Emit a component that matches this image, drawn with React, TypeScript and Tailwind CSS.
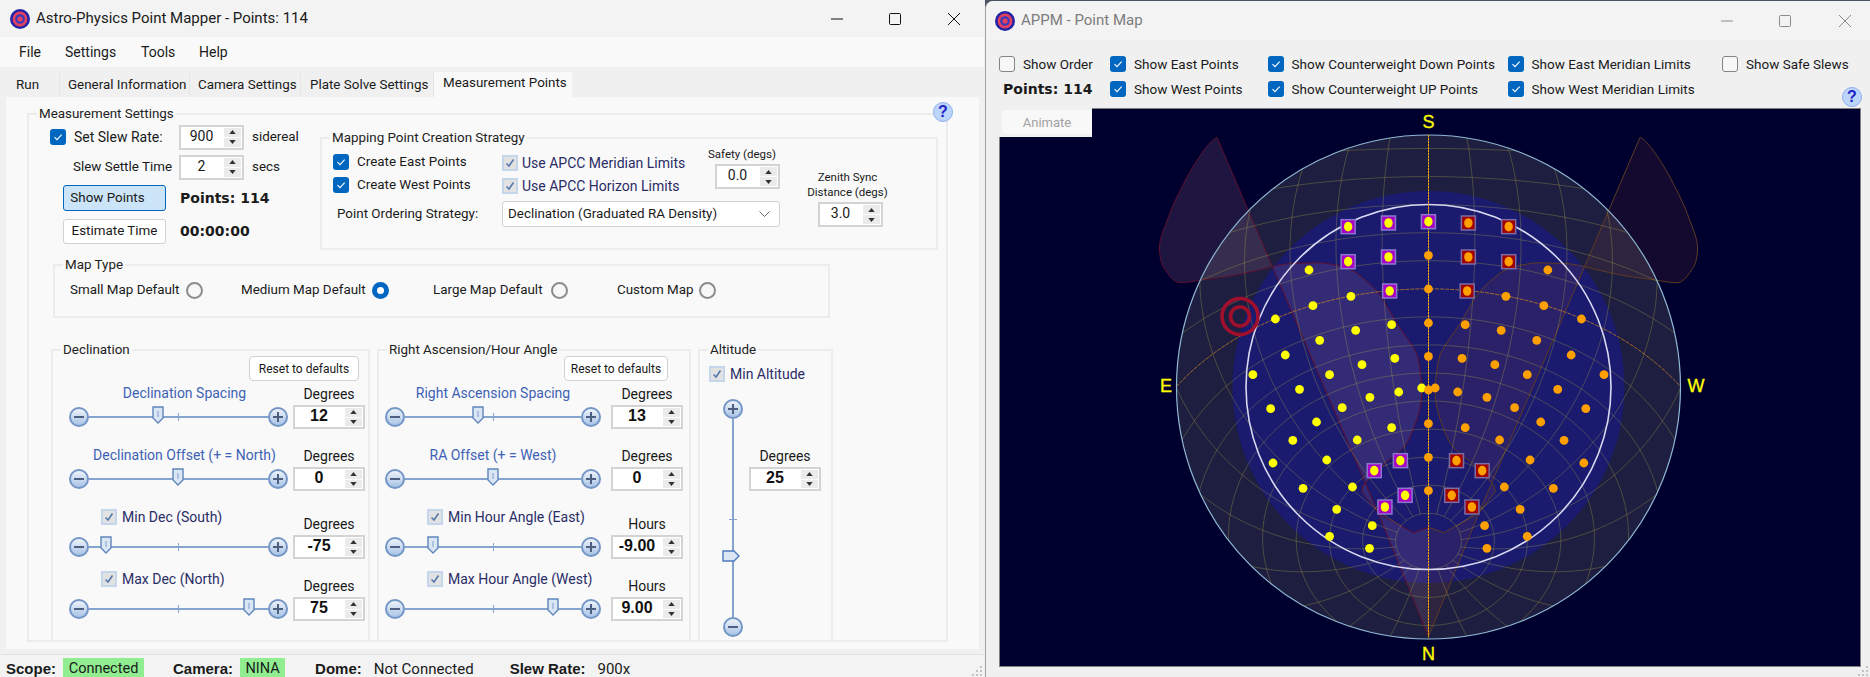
import type { ReactNode } from "react";

// ---------- small win32 style controls ----------

const Check = ({ kind = "on" }: { kind?: "on" | "off" | "tri" }) => {
  if (kind === "off") {
    return <span className="block h-4 w-4 shrink-0 rounded-[3px] border border-[#858585] bg-[#f7f7f7]" />;
  }
  if (kind === "tri") {
    return (
      <span className="flex h-4 w-4 shrink-0 items-center justify-center border-2 border-[#c6d6ea] bg-[#e2e2e2]">
        <svg width="10" height="10" viewBox="0 0 10 10">
          <path d="M1.5 5.5 4 8l4.5-6.5" fill="none" stroke="#5578ad" strokeWidth="1.6" />
        </svg>
      </span>
    );
  }
  return (
    <span className="flex h-4 w-4 shrink-0 items-center justify-center rounded-[3px] bg-[#0067c0]">
      <svg width="10" height="10" viewBox="0 0 10 10">
        <path d="M1.5 5.2 4 7.6l4.6-5" fill="none" stroke="#fff" strokeWidth="1.1" />
      </svg>
    </span>
  );
};

const Radio = ({ on = false }: { on?: boolean }) =>
  on ? (
    <span className="flex h-[17px] w-[17px] shrink-0 items-center justify-center rounded-full bg-[#0067c0]">
      <span className="h-[7px] w-[7px] rounded-full bg-white" />
    </span>
  ) : (
    <span className="block h-[17px] w-[17px] shrink-0 rounded-full border-2 border-[#8c8c8c] bg-[#f7f7f7]" />
  );

const Tri = ({ down = false }: { down?: boolean }) => (
  <svg width="7" height="4" viewBox="0 0 8 5">
    <path d={down ? "M0 0h8L4 5z" : "M0 5h8L4 0z"} fill="#333" />
  </svg>
);

const Spinner = ({ value, wide = false }: { value: string; wide?: boolean }) => (
  <div
    className={`flex shrink-0 border-2 border-[#d3d3d3] bg-white ${wide ? "h-[24px] w-[72px]" : "h-[25px] w-[65px]"}`}
  >
    <div
      className={`flex-1 pr-[2px] text-center ${
        wide
          ? "font-['Liberation_Sans',sans-serif] text-[16px] leading-[18px] font-bold text-[#111]"
          : "text-[14px] leading-[18px]"
      }`}
    >
      {value}
    </div>
    <div className="mr-px flex w-[17px] flex-col gap-px bg-white py-px">
      <div className="flex flex-1 items-center justify-center bg-[#ebebeb]">
        <Tri />
      </div>
      <div className="flex flex-1 items-center justify-center bg-[#ebebeb]">
        <Tri down />
      </div>
    </div>
  </div>
);

const Group = ({
  title,
  className,
  children,
}: {
  title: string;
  className: string;
  children?: ReactNode;
}) => (
  <fieldset className={`border-2 border-[#ececec] ${className}`}>
    <legend className="ml-[8px] h-[14px] px-[2px] text-[13.4px] leading-[14px] text-[#222]">{title}</legend>
    {children}
  </fieldset>
);

const Round = ({ plus = false }: { plus?: boolean }) => (
  <span className="flex h-5 w-5 shrink-0 items-center justify-center rounded-full border-2 border-[#7396c6] bg-gradient-to-b from-[#eef3fa] to-[#a9c3e6]">
    <svg width="10" height="10" viewBox="0 0 10 10">
      <path d={plus ? "M0 5h10M5 0v10" : "M0 5h10"} stroke="#4c5f80" strokeWidth="2" />
    </svg>
  </span>
);

const Thumb = () => (
  <svg width="12" height="18" viewBox="0 0 12 18">
    <path d="M1 1h10v11l-5 5-5-5z" fill="#dbe6f5" stroke="#5f86bb" strokeWidth="1.4" />
    <path d="M6 5v6" stroke="#7f9fcb" />
  </svg>
);

const HSlider = ({ width, thumb, tick }: { width: number; thumb: number; tick: number }) => (
  <div className="relative flex h-5 items-center" style={{ width }}>
    <Round />
    <span className="h-[2px] flex-1 bg-[#85a5cf]" />
    <Round plus />
    <span className="absolute top-[6px] h-2 w-px bg-[#85a5cf]" style={{ left: tick }} />
    <span className="absolute -top-[1px] flex" style={{ left: thumb - 6 }}>
      <Thumb />
    </span>
  </div>
);

const Help = ({ className }: { className: string }) => (
  <span
    className={`absolute flex h-5 w-5 items-center justify-center rounded-full border border-[#8fb0ea] bg-[#bcd5fb] font-['Liberation_Sans',sans-serif] text-[16px] font-bold text-[#2222c8] ${className}`}
  >
    ?
  </span>
);

const Logo = ({ className }: { className: string }) => (
  <svg className={className} width="20" height="20" viewBox="0 0 20 20">
    <circle cx="10" cy="10" r="10" fill="#2324a5" />
    <circle cx="10" cy="10" r="7.4" fill="#e5405e" />
    <circle cx="10" cy="10" r="4.8" fill="#3a3ab8" />
    <circle cx="10" cy="10" r="2.6" fill="#e5405e" />
  </svg>
);

const WinButtons = ({ color, gaps }: { color: string; gaps: [string, string] }) => (
  <div className="flex items-center">
    <svg width="12" height="12" viewBox="0 0 12 12">
      <path d="M0 6h12" stroke={color} />
    </svg>
    <svg className={gaps[0]} width="12" height="12" viewBox="0 0 12 12">
      <rect x=".5" y=".5" width="11" height="11" rx="1" fill="none" stroke={color} />
    </svg>
    <svg className={gaps[1]} width="12" height="12" viewBox="0 0 12 12">
      <path d="M0 0l12 12M12 0 0 12" stroke={color} />
    </svg>
  </div>
);

const Grip = ({ className }: { className: string }) => (
  <svg className={`absolute ${className}`} width="14" height="12" viewBox="0 0 14 12" fill="#c4c4c4">
    <rect x="10" y="1" width="2" height="2" />
    <rect x="6" y="5" width="2" height="2" />
    <rect x="10" y="5" width="2" height="2" />
    <rect x="2" y="9" width="2" height="2" />
    <rect x="6" y="9" width="2" height="2" />
    <rect x="10" y="9" width="2" height="2" />
  </svg>
);

// ---------- slider rows ----------

type Row = {
  title: string;
  checked?: boolean;
  unit: string;
  value: string;
  thumb: number;
  gap: string;
};

const titleTone = (row: Row) => (row.checked ? "text-[#2a2c66]" : "text-[#3d62b5]");

const SliderRow = ({
  row,
  width,
  spinGap,
  tick,
  titleClass,
  checkOffset,
}: {
  row: Row;
  width: number;
  spinGap: string;
  tick: number;
  titleClass: string;
  checkOffset: string;
}) => (
  <div className={row.gap}>
    <div className={`flex ${row.checked ? "h-[26px]" : "h-[19px]"}`}>
      <div style={{ width }}>
        {row.checked ? (
          <div className={`flex h-4 items-center gap-[5px] ${checkOffset}`}>
            <Check kind="tri" />
            <span className={`text-[14px] ${titleTone(row)}`}>{row.title}</span>
          </div>
        ) : (
          <div className={`whitespace-nowrap text-center text-[14px] leading-[15px] ${titleClass} ${titleTone(row)}`}>
            {row.title}
          </div>
        )}
      </div>
      <div className={`flex w-[72px] items-end justify-center pb-[3px] text-[14px] leading-[15px] ${spinGap}`}>
        {row.unit}
      </div>
    </div>
    <div className="flex items-center">
      <HSlider width={width} thumb={row.thumb} tick={tick} />
      <div className={spinGap}>
        <Spinner wide value={row.value} />
      </div>
    </div>
  </div>
);

const decRows: Row[] = [
  { title: "Declination Spacing", unit: "Degrees", value: "12", thumb: 89, gap: "mt-[5px]" },
  { title: "Declination Offset (+ = North)", unit: "Degrees", value: "0", thumb: 109, gap: "mt-[19px]" },
  { title: "Min Dec (South)", checked: true, unit: "Degrees", value: "-75", thumb: 37, gap: "mt-[18px]" },
  { title: "Max Dec (North)", checked: true, unit: "Degrees", value: "75", thumb: 180, gap: "mt-[12px]" },
];

const raRows: Row[] = [
  { title: "Right Ascension Spacing", unit: "Degrees", value: "13", thumb: 93, gap: "mt-[5px]" },
  { title: "RA Offset (+ = West)", unit: "Degrees", value: "0", thumb: 108, gap: "mt-[19px]" },
  { title: "Min Hour Angle (East)", checked: true, unit: "Hours", value: "-9.00", thumb: 48, gap: "mt-[18px]" },
  { title: "Max Hour Angle (West)", checked: true, unit: "Hours", value: "9.00", thumb: 168, gap: "mt-[12px]" },
];

// ---------- point map drawing, azimuthal equidistant sky at latitude 35 ----------

const CX = 1428.5;
const CY = 387;
const PX_PER_DEG = 2.8056;
const rad = Math.PI / 180;
const LAT = 35 * rad;

const sky = (dec: number, ha: number): [number, number] => {
  const d = dec * rad;
  const h = ha * rad;
  const sinAlt = Math.sin(LAT) * Math.sin(d) + Math.cos(LAT) * Math.cos(d) * Math.cos(h);
  const z = 90 - Math.asin(Math.max(-1, Math.min(1, sinAlt))) / rad;
  const north = Math.cos(LAT) * Math.sin(d) - Math.sin(LAT) * Math.cos(d) * Math.cos(h);
  const west = Math.cos(d) * Math.sin(h);
  const n = Math.hypot(north, west) || 1;
  const r = z * PX_PER_DEG;
  return [CX + (r * west) / n, CY + (r * north) / n];
};

const toPath = (pts: [number, number][]) =>
  "M" + pts.map(([x, y]) => `${x.toFixed(1)} ${y.toFixed(1)}`).join("L");

const decLine = (dec: number) => {
  const pts: [number, number][] = [];
  for (let ha = -180; ha <= 180; ha += 3) pts.push(sky(dec, ha));
  return toPath(pts);
};

const haLine = (ha: number) => {
  const pts: [number, number][] = [];
  for (let dec = -54; dec <= 80; dec += 2) pts.push(sky(dec, ha));
  return toPath(pts);
};

const decs = [-50, -40, -30, -20, -10, 10, 20, 30, 40, 50, 60, 70, 80];
const hours = Array.from({ length: 24 }, (_, i) => -180 + i * 15);

// point places read off a crop, x at 2.529 and y at 3 to the pixel, origin 1120,110
const at = ([x, y]: number[]) => [1120 + x / 2.529, 110 + y / 3];

const yellow = [
  [478, 480], [584, 559], [488, 587], [393, 627], [596, 661], [687, 644], [505, 691], [418, 735],
  [612, 764], [695, 745], [530, 794], [336, 794], [454, 838], [705, 846], [632, 862], [763, 834],
  [381, 896], [562, 893], [497, 936], [687, 953], [437, 991], [600, 990], [387, 1059], [523, 1050],
  [463, 1135], [588, 1131], [548, 1198], [638, 1247], [530, 1279], [631, 1315],
].map(at);

const orange = [
  [1082, 480], [976, 559], [1072, 587], [1167, 627], [873, 644], [964, 661], [1054, 691], [1141, 735],
  [865, 745], [948, 764], [1030, 794], [1224, 794], [1107, 838], [854, 846], [928, 862], [797, 834],
  [1178, 896], [998, 893], [1064, 936], [873, 953], [960, 990], [1123, 991], [1173, 1059], [1037, 1050],
  [1096, 1135], [972, 1131], [1012, 1198], [922, 1247], [1030, 1279], [928, 1315],
  [780, 436], [780, 537], [780, 639], [780, 739], [780, 840], [780, 941], [780, 1042], [780, 1142],
].map(at);

const purple = [
  [577, 350], [679, 339], [780, 335], [577, 455], [679, 441], [682, 543],
  [709, 1052], [643, 1082], [721, 1156], [670, 1191],
].map(at);

const red = [
  [881, 339], [983, 350], [881, 441], [983, 455], [878, 543],
  [851, 1052], [916, 1082], [839, 1156], [890, 1191],
].map(at);

const horn =
  "M1216.9 137.3C1209 141 1198 158 1187 177C1178 195 1172 206 1167.4 220C1162 233 1159 242 1159.5 250C1160 260 1162 266 1165.5 270C1170 277 1174 282 1179.3 282.7C1190 283 1203 279 1214.9 278.3C1235 276 1255 271 1272.2 266.7" +
  "C1282 264 1292 263 1301.9 263.3C1312 263 1320 262 1329.6 264C1342 266 1349 268 1357.2 273.3C1368 282 1375 288 1381 296.7C1388 308 1392 315 1396.8 323.3C1404 335 1411 342 1416.6 353.3C1420 365 1421 376 1422 387C1422 400 1420 410 1416.7 420C1413 430 1411 436 1406.7 443.3C1401 452 1394 456 1386.7 461.7L1363.3 485L1361.7 491.7L1378.3 513.3Z";
const cone = "M1378.3 513.3L1413.3 532.7L1428.5 527.3L1428.5 636.7Z";

const mirror = `translate(${2 * CX} 0) scale(-1 1)`;

const PointMap = () => (
  <svg className="block" width="860" height="557" viewBox="1000 109 860 557">
    <rect x="1000" y="109" width="860" height="557" fill="#00002f" />
    <defs>
      <clipPath id="horizon">
        <circle cx={CX} cy={CY} r="252" />
      </clipPath>
    </defs>

    <circle cx={CX} cy={CY} r="252" fill="#1e1e40" />
    <circle cx={CX} cy={CY} r="196" fill="#1a1a6e" />

    <g transform={mirror}>
      <path d={horn} fill="#b45a3c" fillOpacity=".11" stroke="#5e3a24" />
      <path d={cone} fill="#b45a3c" fillOpacity=".11" stroke="#5e3a24" />
    </g>
    <path d={horn} fill="#c88caa" fillOpacity=".15" stroke="#5e1030" />
    <path d={cone} fill="#c88caa" fillOpacity=".15" stroke="#5e1030" />

    <g clipPath="url(#horizon)" fill="none" stroke="#a8a448" strokeOpacity=".34">
      {decs.map((d) => (
        <path key={d} d={decLine(d)} />
      ))}
      {hours.map((h) => (
        <path key={h} d={haLine(h)} />
      ))}
      <path d={decLine(0)} stroke="#c07c28" strokeOpacity=".8" strokeDasharray="4 1" />
    </g>

    <circle cx={CX} cy={CY} r="252" fill="none" stroke="#8fb8d2" strokeWidth="1.2" />
    <circle cx={CX} cy={CY} r="182.5" fill="none" stroke="#d8d8f2" strokeWidth="1.6" />
    <path d={`M${CX} 135V637`} stroke="#ffa500" strokeDasharray="2 1" />

    <g fill="none" stroke="#a0102c" strokeWidth="3.6">
      <circle cx="1240" cy="316.5" r="18" />
      <circle cx="1240" cy="316.5" r="9.5" />
    </g>

    {purple.map(([x, y]) => (
      <g key={`${x}-${y}`}>
        <rect x={x - 7} y={y - 7} width="14" height="14" fill="#a800c4" stroke="#8a78d0" strokeWidth="1.5" />
        <ellipse cx={x} cy={y} rx="4.2" ry="4.8" fill="#ffff00" />
      </g>
    ))}
    {red.map(([x, y]) => (
      <g key={`${x}-${y}`}>
        <rect x={x - 7} y={y - 7} width="14" height="14" fill="#a00000" stroke="#7a6ca8" strokeWidth="1.5" />
        <ellipse cx={x} cy={y} rx="4.2" ry="4.8" fill="#ffa000" />
      </g>
    ))}
    {yellow.map(([x, y]) => (
      <circle key={`${x}-${y}`} cx={x} cy={y} r="4.4" fill="#ffff00" />
    ))}
    {orange.map(([x, y]) => (
      <circle key={`${x}-${y}`} cx={x} cy={y} r="4.4" fill="#ffa000" />
    ))}

    <g
      fill="#ffff00"
      stroke="#ffff00"
      strokeWidth=".3"
      fontFamily="'Liberation Sans', sans-serif"
      fontSize="18"
      textAnchor="middle"
    >
      <text x="1428.5" y="128">S</text>
      <text x="1428.5" y="660">N</text>
      <text x="1166" y="392">E</text>
      <text x="1696" y="392">W</text>
    </g>
  </svg>
);

// ---------- windows ----------

const tabClass = "flex h-6 items-center whitespace-nowrap border-r border-[#e6e6e6]";

const PointMapper = () => (
  <div className="relative flex h-[677px] w-[984px] shrink-0 flex-col bg-[#f0f0f0]">
    <div className="flex h-[37px] shrink-0 items-center bg-[#f3f3f3]">
      <Logo className="ml-[10px]" />
      <span className="ml-[6px] text-[15px]">Astro-Physics Point Mapper - Points: 114</span>
      <div className="ml-auto mr-[24px]">
        <WinButtons color="#111" gaps={["ml-[46px]", "ml-[47px]"]} />
      </div>
    </div>

    <div className="flex h-[30px] shrink-0 items-center bg-[#f9f9f9] pl-[19px] text-[14px]">
      <span className="w-[46px]">File</span>
      <span className="w-[76px]">Settings</span>
      <span className="w-[58px]">Tools</span>
      <span>Help</span>
    </div>

    <div className="flex h-[30px] shrink-0 items-end pl-[8px] text-[13.4px]">
      <span className={`${tabClass} w-[52px] pl-2`}>Run</span>
      <span className={`${tabClass} w-[130px] pl-2`}>General Information</span>
      <span className={`${tabClass} w-[111px] pl-2`}>Camera Settings</span>
      <span className={`${tabClass} w-[133px] pl-[9px]`}>Plate Solve Settings</span>
      <span className="flex h-[25px] w-[138px] items-center whitespace-nowrap bg-[#f9f9f9] pb-[3px] pl-[9px]">
        Measurement Points
      </span>
    </div>

    <div className="relative ml-[6px] h-[552px] w-[973px] shrink-0 bg-[#f9f9f9] pl-[21px] pt-[10px]">
      <Group title="Measurement Settings" className="h-[535px] w-[921px]">
        <div className="flex">
          <div className="w-[291px] shrink-0 text-[13.4px]">
            <div className="mt-[4px] flex h-6 items-center">
              <div className="flex w-[150px] items-center pl-[21px]">
                <Check />
                <span className="ml-2 text-[14px]">Set Slew Rate:</span>
              </div>
              <Spinner value="900" />
              <span className="ml-2">sidereal</span>
            </div>
            <div className="mt-[6px] flex h-6 items-center">
              <div className="w-[150px] pl-[44px]">Slew Settle Time</div>
              <Spinner value="2" />
              <span className="ml-2">secs</span>
            </div>
            <div className="mt-[6px] flex items-center">
              <button className="ml-[34px] h-[26px] w-[103px] rounded-[3px] border border-[#0067c0] bg-[#cce4f7] pr-[14px] text-center">
                Show Points
              </button>
              <span className="ml-[14px] font-['DejaVu_Sans',sans-serif] text-[14px] font-bold">Points: 114</span>
            </div>
            <div className="mt-[8px] flex items-center">
              <button className="ml-[34px] h-[25px] w-[103px] rounded-[3px] border border-[#d2d2d2] bg-white text-center">
                Estimate Time
              </button>
              <span className="ml-[14px] font-['DejaVu_Sans',sans-serif] text-[14px] font-bold">00:00:00</span>
            </div>
          </div>

          <Group title="Mapping Point Creation Strategy" className="mt-[10px] h-[119px] w-[618px]">
            <div className="flex text-[13.4px]">
              <div className="w-[463px] shrink-0">
                <div className="flex pt-[9px]">
                  <div className="ml-[11px] flex w-[169px] flex-col gap-[7px]">
                    <div className="flex h-4 items-center gap-2">
                      <Check />
                      Create East Points
                    </div>
                    <div className="flex h-4 items-center gap-2">
                      <Check />
                      Create West Points
                    </div>
                  </div>
                  <div className="mt-px flex w-[198px] flex-col gap-[7px] text-[14px] text-[#2a2c66]">
                    <div className="flex h-4 items-center gap-1">
                      <Check kind="tri" />
                      Use APCC Meridian Limits
                    </div>
                    <div className="flex h-4 items-center gap-1">
                      <Check kind="tri" />
                      Use APCC Horizon Limits
                    </div>
                  </div>
                  <div className="-mt-[7px] w-[85px]">
                    <div className="h-[14px] pl-[8px] text-[11.5px] leading-[14px]">Safety (degs)</div>
                    <div className="ml-[15px] mt-[3px]">
                      <Spinner value="0.0" />
                    </div>
                  </div>
                </div>
                <div className="mt-[7px] flex items-center">
                  <span className="ml-[15px] w-[165px]">Point Ordering Strategy:</span>
                  <div className="flex h-[26px] w-[278px] items-center justify-between rounded-[3px] border border-[#d2d2d2] bg-white pl-[5px] pr-[9px]">
                    Declination (Graduated RA Density)
                    <svg width="11" height="6" viewBox="0 0 11 6">
                      <path d="M.5.5l5 5 5-5" fill="none" stroke="#666" />
                    </svg>
                  </div>
                </div>
              </div>
              <div className="ml-[21px] mt-[25px] w-[83px] text-center text-[11.5px] leading-[15px]">
                <div>Zenith Sync</div>
                <div className="whitespace-nowrap">Distance (degs)</div>
                <div className="ml-[12px] mt-[2px] text-[14px]">
                  <Spinner value="3.0" />
                </div>
              </div>
            </div>
          </Group>
        </div>

        <Group title="Map Type" className="ml-[24px] mt-[8px] h-[60px] w-[777px]">
          <div className="flex h-[36px] items-center pl-[15px] text-[13.4px]">
            <span className="w-[116px]">Small Map Default</span>
            <Radio />
            <span className="ml-[38px] w-[131px]">Medium Map Default</span>
            <Radio on />
            <span className="ml-[44px] w-[118px]">Large Map Default</span>
            <Radio />
            <span className="ml-[49px] w-[82px]">Custom Map</span>
            <Radio />
          </div>
        </Group>

        <div className="ml-[22px] mt-[25px] flex gap-[7px]">
          <Group title="Declination" className="h-[298px] w-[319px] border-b-0">
            <div className="-mt-px ml-[196px] flex h-[25px] w-[110px] items-center justify-center rounded-[4px] border border-[#d2d2d2] bg-white text-[12px]">
              Reset to defaults
            </div>
            <div className="ml-[16px]">
              {decRows.map((row) => (
                <SliderRow
                  key={row.title}
                  row={row}
                  width={219}
                  spinGap="ml-[5px]"
                  tick={109}
                  titleClass="pl-[12px]"
                  checkOffset="pl-[32px]"
                />
              ))}
            </div>
          </Group>

          <Group title="Right Ascension/Hour Angle" className="h-[298px] w-[314px] border-b-0">
            <div className="-mt-px ml-[185px] flex h-[25px] w-[104px] items-center justify-center rounded-[4px] border border-[#d2d2d2] bg-white text-[12px]">
              Reset to defaults
            </div>
            <div className="ml-[6px]">
              {raRows.map((row) => (
                <SliderRow
                  key={row.title}
                  row={row}
                  width={216}
                  spinGap="ml-[10px]"
                  tick={108}
                  titleClass=""
                  checkOffset="pl-[42px]"
                />
              ))}
            </div>
          </Group>

          <Group title="Altitude" className="h-[298px] w-[135px] border-b-0">
            <div className="ml-[9px] mt-[9px] flex h-4 items-center gap-[5px] text-[14px] text-[#2a2c66]">
              <Check kind="tri" />
              Min Altitude
            </div>
            <div className="mt-[17px] flex">
              <div className="relative ml-[23px] flex h-[238px] w-5 flex-col items-center">
                <Round plus />
                <span className="w-[2px] flex-1 bg-[#85a5cf]" />
                <Round />
                <span className="absolute left-[6px] top-[120px] h-px w-2 bg-[#85a5cf]" />
                <svg className="absolute -left-[1px] top-[151px]" width="18" height="12" viewBox="0 0 18 12">
                  <path d="M1 1h11l5 5-5 5H1z" fill="#dbe6f5" stroke="#4f7ab8" strokeWidth="1.4" />
                </svg>
              </div>
              <div className="ml-[6px] mt-[49px]">
                <div className="flex h-[19px] w-[72px] items-end justify-center pb-[3px] text-[14px] leading-[15px]">
                  Degrees
                </div>
                <Spinner wide value="25" />
              </div>
            </div>
          </Group>
        </div>
      </Group>
      <Help className="left-[927px] top-[5px]" />
    </div>

    <div className="mt-[5px] flex h-[23px] flex-1 items-end overflow-hidden border-t border-[#e2e2e2] bg-[#f3f3f3] pl-[6px] text-[15px] leading-[16px]">
      <b className="font-['Liberation_Sans',sans-serif] text-[15px]">Scope:</b>
      <span className="ml-[7px] h-[19px] w-[81px] bg-[#90ee90] pt-[3px] text-center text-[14.5px]">Connected</span>
      <b className="ml-[29px] font-['Liberation_Sans',sans-serif] text-[15px]">Camera:</b>
      <span className="ml-[7px] h-[19px] w-[45px] bg-[#90ee90] pt-[3px] text-center text-[14.5px]">NINA</span>
      <b className="ml-[30px] font-['Liberation_Sans',sans-serif] text-[15px]">Dome:</b>
      <span className="ml-[12px]">Not Connected</span>
      <b className="ml-[36px] font-['Liberation_Sans',sans-serif] text-[15px]">Slew Rate:</b>
      <span className="ml-[12px]">900x</span>
    </div>
    <Grip className="bottom-0 right-0" />
  </div>
);

const mapChecks: [string, "on" | "off"][][] = [
  [["Show East Points", "on"], ["Show Counterweight Down Points", "on"], ["Show East Meridian Limits", "on"], ["Show Safe Slews", "off"]],
  [["Show West Points", "on"], ["Show Counterweight UP Points", "on"], ["Show West Meridian Limits", "on"]],
];

const MapCheck = ({ label, kind }: { label: string; kind: "on" | "off" }) => (
  <div className="flex h-4 items-center gap-2 whitespace-nowrap">
    <Check kind={kind} />
    {label}
  </div>
);

const PointMapWindow = () => (
  <div className="relative mt-px flex h-[676px] flex-1 flex-col rounded-tl-[8px] border-l border-[#a4a4a4] bg-[#f0f0f0]">
    <div className="flex h-[39px] shrink-0 items-center rounded-tl-[8px] bg-[#f3f3f3]">
      <Logo className="ml-[9px]" />
      <span className="ml-[6px] text-[15px] text-[#7c7c7c]">APPM - Point Map</span>
      <div className="ml-auto mr-[19px]">
        <WinButtons color="#8a8a8a" gaps={["ml-[46px]", "ml-[48px]"]} />
      </div>
    </div>

    <div className="ml-[13px] mt-[16px] grid grid-cols-[111px_157.5px_240px_214.5px_auto] gap-y-[9px] text-[13.5px]">
      <MapCheck label="Show Order" kind="off" />
      {mapChecks[0].map(([label, kind]) => (
        <MapCheck key={label} label={label} kind={kind} />
      ))}
      <span className="h-4 pl-[4px] font-['DejaVu_Sans',sans-serif] text-[14px] leading-4 font-bold">Points: 114</span>
      {mapChecks[1].map(([label, kind]) => (
        <MapCheck key={label} label={label} kind={kind} />
      ))}
    </div>

    <div className="relative ml-[13px] mt-[11px] w-[862px] border border-[#808080]">
      <PointMap />
      <div className="absolute -left-px -top-px h-[29px] w-[93px] bg-[#f0f0f0] pl-[3px] pt-[2px]">
        <div className="flex h-[24px] items-center justify-center rounded-[3px] bg-[#f8f8f8] pt-px text-[13px] text-[#a2a2a2]">
          Animate
        </div>
      </div>
    </div>
    <Help className="right-[8px] top-[86px]" />
    <Grip className="bottom-0 right-0" />
  </div>
);

export default function App() {
  return (
    <div className="flex h-[677px] w-[1870px] overflow-hidden bg-[#4b5563] font-[Roboto,sans-serif] text-[#1a1a1a]">
      <PointMapper />
      <div className="w-px bg-[#f0f0f0]" />
      <PointMapWindow />
    </div>
  );
}
